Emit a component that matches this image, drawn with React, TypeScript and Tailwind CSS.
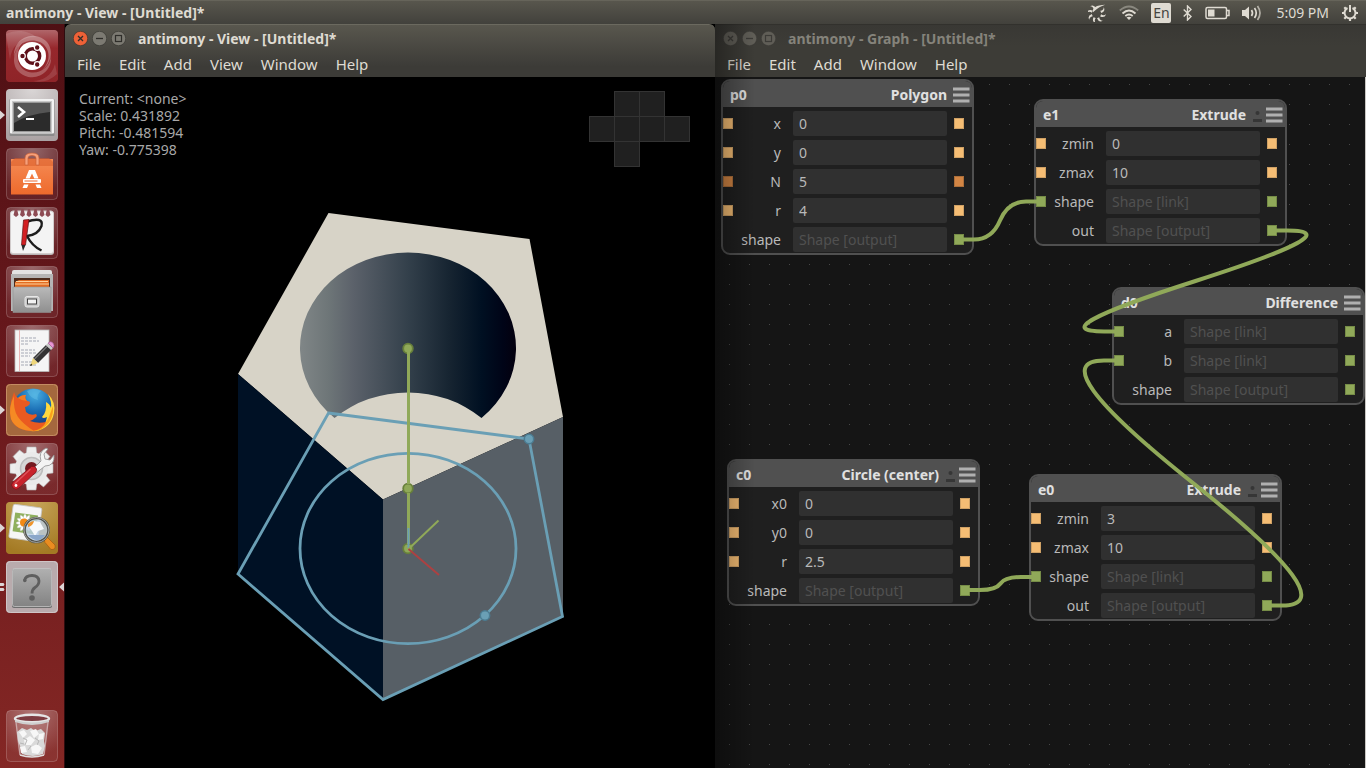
import type { ReactNode } from "react";

type PortColor = "float" | "int" | "shape" | "none";

const portClass: Record<PortColor, string> = {
  float: "border-[#cfa165] bg-[#f5bd74]",
  int: "border-[#ad6f3a] bg-[#d28544]",
  shape: "border-[#768c47] bg-[#90a959]",
  none: "border-transparent",
};

type Row = { name: string; value?: string; hint?: string; left: PortColor; right: PortColor };
type NodeInfo = { id: string; title: string; place: string; dot: boolean; rows: Row[] };

const nodes: NodeInfo[] = [
  {
    id: "p0",
    title: "Polygon",
    place: "left-[6px] top-[2px]",
    dot: false,
    rows: [
      { name: "x", value: "0", left: "float", right: "float" },
      { name: "y", value: "0", left: "float", right: "float" },
      { name: "N", value: "5", left: "int", right: "int" },
      { name: "r", value: "4", left: "float", right: "float" },
      { name: "shape", hint: "Shape [output]", left: "none", right: "shape" },
    ],
  },
  {
    id: "e1",
    title: "Extrude",
    place: "left-[319px] top-[22px]",
    dot: true,
    rows: [
      { name: "zmin", value: "0", left: "float", right: "float" },
      { name: "zmax", value: "10", left: "float", right: "float" },
      { name: "shape", hint: "Shape [link]", left: "shape", right: "shape" },
      { name: "out", hint: "Shape [output]", left: "none", right: "shape" },
    ],
  },
  {
    id: "d0",
    title: "Difference",
    place: "left-[397px] top-[210px]",
    dot: false,
    rows: [
      { name: "a", hint: "Shape [link]", left: "shape", right: "shape" },
      { name: "b", hint: "Shape [link]", left: "shape", right: "shape" },
      { name: "shape", hint: "Shape [output]", left: "none", right: "shape" },
    ],
  },
  {
    id: "c0",
    title: "Circle (center)",
    place: "left-[12px] top-[382px]",
    dot: true,
    rows: [
      { name: "x0", value: "0", left: "float", right: "float" },
      { name: "y0", value: "0", left: "float", right: "float" },
      { name: "r", value: "2.5", left: "float", right: "float" },
      { name: "shape", hint: "Shape [output]", left: "none", right: "shape" },
    ],
  },
  {
    id: "e0",
    title: "Extrude",
    place: "left-[314px] top-[397px]",
    dot: true,
    rows: [
      { name: "zmin", value: "3", left: "float", right: "float" },
      { name: "zmax", value: "10", left: "float", right: "float" },
      { name: "shape", hint: "Shape [link]", left: "shape", right: "shape" },
      { name: "out", hint: "Shape [output]", left: "none", right: "shape" },
    ],
  },
];

function Port({ color }: { color: PortColor }) {
  return <span className={`h-[11px] w-[10px] shrink-0 border ${portClass[color]}`} />;
}

function NodeCard({ node }: { node: NodeInfo }) {
  return (
    <section className={`absolute w-[253px] overflow-hidden rounded-[9px] border-2 border-[#505050] bg-[#1f1f1f] pb-px ${node.place}`}>
      <header className="flex h-[26px] items-center bg-[#505050] pt-[2px] pr-[2px] pl-[7px] text-sm font-bold text-[#e0e0e0]">
        <span className="flex-1">{node.id}</span>
        <span>{node.title}</span>
        {node.dot && (
          <svg className="ml-[6px]" width="11" height="18" viewBox="0 0 11 18" aria-hidden="true">
            <circle cx="5.5" cy="7" r="2" fill="#363636" />
            <rect x="1" y="13" width="9" height="3" rx="0.5" fill="#363636" />
          </svg>
        )}
        <button type="button" aria-label={`${node.id} menu`} className={node.dot ? "ml-[3px]" : "ml-[6px]"}>
          <svg width="17" height="16" viewBox="0 0 17 16" className="block">
            <path d="M0 2h16.5M0 8h16.5M0 14h16.5" stroke="#b0b0b0" strokeWidth="3" />
          </svg>
        </button>
      </header>
      <div className="flex flex-col gap-1 pt-1">
        {node.rows.map((row) => (
          <div key={row.name} className="flex h-[25px] items-center">
            <Port color={row.left} />
            <label htmlFor={`${node.id}-${row.name}`} className="w-12 text-right text-sm text-[#b9b9b9]">
              {row.name}
            </label>
            <input
              id={`${node.id}-${row.name}`}
              defaultValue={row.value}
              placeholder={row.hint}
              readOnly={row.hint !== undefined}
              className="mr-[7px] ml-3 h-[25px] w-[154px] rounded-xs bg-[#303030] px-[6px] text-sm text-[#b9b9b9] outline-none placeholder:text-[#505050]"
            />
            <Port color={row.right} />
          </div>
        ))}
      </div>
    </section>
  );
}

function WindowFrame({ title, menus, active, children }: { title: string; menus: string[]; active: boolean; children: ReactNode }) {
  const glyph = active ? "#2f2e2a" : "#3c3b37";
  const disc = active ? "#7c7a72" : "#605e57";
  const rim = active ? "#33322e" : "#3c3b37";
  return (
    <div className="flex h-full flex-col">
      <div
        className={
          active
            ? "rounded-t-md border-t border-[#6b695f] bg-linear-to-b from-[#59574e] to-[#3c3b37] to-80%"
            : "border-t border-[#32312d] bg-linear-to-b from-[#393834] to-[#3d3c37] to-40%"
        }
      >
        <div className="flex h-[27px] items-center gap-1 pl-2">
          <button type="button" aria-label="Close">
            <svg width="15" height="15" viewBox="0 0 15 15" className="block">
              <circle cx="7.5" cy="7.5" r="7.2" fill={active ? "#ee6137" : disc} stroke={rim} strokeWidth="0.6" />
              <path d="M5 5l5 5M10 5l-5 5" stroke={glyph} strokeWidth="1.3" />
            </svg>
          </button>
          <button type="button" aria-label="Minimize">
            <svg width="15" height="15" viewBox="0 0 15 15" className="block">
              <circle cx="7.5" cy="7.5" r="7.2" fill={disc} stroke={rim} strokeWidth="0.6" />
              <path d="M4 7.5h7" stroke={glyph} strokeWidth="1.3" />
            </svg>
          </button>
          <button type="button" aria-label="Maximize">
            <svg width="15" height="15" viewBox="0 0 15 15" className="block">
              <circle cx="7.5" cy="7.5" r="7.2" fill={disc} stroke={rim} strokeWidth="0.6" />
              <rect x="4.5" y="4.5" width="6" height="6" fill="none" stroke={glyph} strokeWidth="1.2" />
            </svg>
          </button>
          <h1 className={`ml-2 text-sm font-bold ${active ? "text-[#dfdbd2]" : "text-[#85837b]"}`}>{title}</h1>
        </div>
        <nav className="flex h-[25px] items-center gap-[18px] pl-3 text-[15px] text-[#dfdbd2]">
          {menus.map((m) => (
            <button key={m} type="button">
              {m}
            </button>
          ))}
        </nav>
      </div>
      <div className="relative min-h-0 flex-1 overflow-hidden">{children}</div>
    </div>
  );
}

function Scene() {
  return (
    <svg className="block h-full w-full" viewBox="65 77 650 691" aria-label="3D view">
      <defs>
        <linearGradient id="bore" gradientUnits="userSpaceOnUse" x1="300" y1="0" x2="516" y2="0">
          <stop offset="0" stopColor="#808687" />
          <stop offset="0.13" stopColor="#6e7678" />
          <stop offset="0.25" stopColor="#5b616a" />
          <stop offset="0.5" stopColor="#33404b" />
          <stop offset="0.7" stopColor="#152330" />
          <stop offset="0.84" stopColor="#001022" />
          <stop offset="0.94" stopColor="#000417" />
          <stop offset="1" stopColor="#04000e" />
        </linearGradient>
      </defs>
      <path d="M328.500 213L529.500 239L563 417L383 499.500L238 374Z" fill="#d7d3c7" />
      <path d="M238 374L383 499.500V699.500L238 574Z" fill="#001125" />
      <path d="M383 499.500L563 417V616.500L383 699.500Z" fill="#575f66" />
      <path d="M334.500 418A108 95.500 0 1 1 481.500 418A108 95.500 0 0 0 334.500 418Z" fill="url(#bore)" />
      <g fill="none" stroke="#6a9fb5" strokeWidth="2.800">
        <path d="M328.500 413L529 439L562.500 616.500L383 699.500L238 574Z" />
        <ellipse cx="408" cy="548.500" rx="108" ry="95.200" />
      </g>
      <g fill="#6a9fb5" stroke="#4b7c92" strokeWidth="1.500">
        <circle cx="529" cy="439" r="4.700" />
        <circle cx="485" cy="615.500" r="4.700" />
      </g>
      <path d="M408.500 348V548" stroke="#90a959" strokeWidth="3" />
      <g fill="#90a959" stroke="#68803b" strokeWidth="1.800">
        <circle cx="408" cy="348.500" r="4.800" />
        <circle cx="408" cy="488.500" r="4.800" />
        <circle cx="408" cy="548.500" r="4.800" />
      </g>
      <path d="M408.500 348V484M408.500 493V544" stroke="#90a959" strokeWidth="3" />
      <path d="M408.500 528V548" stroke="#6a9fb5" strokeWidth="2" />
      <path d="M408.500 549L438.500 520.500" stroke="#90a959" strokeWidth="2" />
      <path d="M408.500 549L439 575" stroke="#ac4142" strokeWidth="2" />
    </svg>
  );
}

function ViewCube() {
  const cells = [
    [25, 0],
    [50, 0],
    [0, 25],
    [25, 25],
    [50, 25],
    [75, 25],
    [25, 50],
  ];
  return (
    <svg className="absolute top-[14px] right-6 block" width="102" height="77" viewBox="0 0 102 77" aria-hidden="true">
      {cells.map(([x, y]) => (
        <rect key={`${x}-${y}`} x={x + 0.5} y={y + 0.5} width="25" height="25" fill="#202020" stroke="#333333" />
      ))}
    </svg>
  );
}

function Wires() {
  return (
    <svg className="pointer-events-none absolute inset-0 block" width="650" height="691" viewBox="715 77 650 691" fill="none" stroke="#90a959" strokeWidth="4" aria-hidden="true">
      <path d="M959 239.500H974Q992 239.500 1000 220.500Q1008 201.500 1026 201.500H1041" />
      <path d="M965 590H980Q996 590 1000.500 583.500Q1005 577 1021 577H1036" />
      <path d="M1272 230.500H1287Q1353 230.500 1195.500 281Q1038 331.500 1104 331.500H1119" />
      <path d="M1267 605.500H1282Q1347 605.500 1193 483Q1039 360.500 1104 360.500H1119" />
    </svg>
  );
}

function UbuntuIcon() {
  return (
    <>
      <rect width="52" height="52" rx="4" fill="url(#tileUbuntu)" />
      <path d="M8 27a19 19 0 0 1 32-16c8 8 6 22-4 29C46 31 44 17 34 12 23 7 9 14 8 27Z" fill="#fff" opacity="0.3" />
      <path d="M45 26a19 19 0 0 1-33 15C5 33 8 19 16 13c-7 9-6 23 4 28 12 5 24-3 25-15Z" fill="#fff" opacity="0.25" />
      <path d="M0 4a28 28 0 0 1 30 3A24 24 0 0 0 4 30M51 44a26 26 0 0 1-24 7c9 0 19-5 22-17" fill="#fff" opacity="0.12" />
      <circle cx="26" cy="26" r="14" fill="#fff" />
      <circle cx="26.500" cy="26" r="7.200" fill="none" stroke="#5e1019" strokeWidth="3.400" />
      <g stroke="#fff" strokeWidth="1.200" fill="#5e1019">
        <circle cx="16.500" cy="26" r="2.800" />
        <circle cx="31.200" cy="17.500" r="2.800" />
        <circle cx="31.200" cy="34.500" r="2.800" />
      </g>
    </>
  );
}

function TerminalIcon() {
  return (
    <>
      <rect width="52" height="52" rx="4" fill="url(#tileSilver)" />
      <rect x="3.500" y="10" width="45" height="37" rx="1" fill="#8b8b8b" />
      <rect x="4" y="10" width="44" height="34.500" rx="1" fill="#f3f3f3" />
      <rect x="6" y="12" width="40" height="32" fill="#c9c9c9" />
      <rect x="7.500" y="13.500" width="37" height="29" fill="#2b2b2b" stroke="#999" />
      <path d="M8 14h36v9Q22 25 8 34Z" fill="#fff" opacity="0.2" />
      <path d="M12 18l6 5-6 5" fill="none" stroke="#fff" strokeWidth="2.600" />
      <path d="M20 30h8" stroke="#fff" strokeWidth="2" />
    </>
  );
}

function SoftwareIcon() {
  return (
    <>
      <path d="M5 11h42v35.500H5Z" fill="url(#bag)" />
      <path d="M5 14l4-4h34l4 4v4H5Z" fill="#d95c29" opacity="0.55" />
      <path d="M19 17V10q0-5 7-5t7 5v7h-3v-7q0-2.500-4-2.500t-4 2.500v7Z" fill="#f7a07a" stroke="#ca623a" strokeWidth="0.700" />
      <path d="M23 22h6l3.500 8.500h-4.200L26 25.500 23.700 30.500h-4.200Z" fill="#fff" />
      <rect x="17" y="31" width="18" height="4" rx="1" fill="#fff" />
      <path d="M18 36.500h4.500l-1.500 3.500h-4.500ZM29.500 36.500h4.500l1.500 3.500h-4.500Z" fill="#fff" />
      <path d="M18.500 33h13" stroke="#ec6a35" strokeWidth="1" />
    </>
  );
}

function NotesIcon() {
  return (
    <>
      <rect x="4" y="5" width="44" height="43" rx="3" fill="#b9b5b5" />
      <rect x="4.500" y="4" width="43" height="42.500" rx="2.500" fill="#f4f4f4" stroke="#d2cccc" />
      <g fill="#8e4c54">
        {[10, 16.500, 23, 29.500, 36, 42].map((x) => (
          <path key={x} d={`M${x - 1} 2h2l1.500 6-2.500 2-2.500-2Z`} />
        ))}
      </g>
      <path d="M20 15Q38 9 35.500 19Q32 28 21 29Q26 39 35.500 43.500" fill="none" stroke="#1d1d1d" strokeWidth="2.400" />
      <path d="M17.500 13l5.500-.5L19.500 38H15.500Z" fill="#d31f22" stroke="#5e1214" strokeWidth="0.700" />
      <path d="M15.500 38h4L17 44Z" fill="#292929" />
    </>
  );
}

function FilesIcon() {
  return (
    <>
      <path d="M6 6q0-2 2-2h36q2 0 2 2v38H6Z" fill="#e3e3e3" />
      <path d="M5 8h42v37H5Z" fill="#b5b5b5" />
      <rect x="8" y="12" width="36" height="11" fill="#4c2b1d" />
      <path d="M9 16l4-2h30v8H9Z" fill="#e36c22" />
      <path d="M9 18h34M10 15.500h32" stroke="#ffd29b" strokeWidth="1.200" />
      <path d="M7 21h38v25.500H7Z" fill="url(#cabinet)" stroke="#909090" strokeWidth="0.600" />
      <rect x="19" y="30.500" width="14" height="10.500" rx="2" fill="#c9c9c9" stroke="#e7e7e7" />
      <rect x="21.500" y="33" width="9" height="5" fill="#f2f2f2" stroke="#444" />
    </>
  );
}

function EditorIcon() {
  return (
    <>
      <rect x="9" y="5" width="34" height="41.500" fill="#f5f5f5" stroke="#b8b8b8" strokeWidth="0.800" />
      <path d="M13.500 5v41" stroke="#e9b6b6" />
      <path d="M15 13h16M15 16h18M15 19h8M15 25h14M15 28h16M15 31h9M15 37h14M15 40h16" stroke="#a5a9b5" strokeWidth="1" strokeDasharray="3 1" />
      <path d="M27 33L40 20l5 5-13 13Z" fill="#333" />
      <path d="M28.500 34L41 21.500" stroke="#777" strokeWidth="1.200" />
      <path d="M40 20l2-2 5 5-2 2Z" fill="#c9c9c9" />
      <path d="M42 18q3-2.500 5 0t0 5Z" fill="#e896d3" stroke="#a05d93" strokeWidth="0.600" />
      <path d="M27 33l5 5-8 3Z" fill="#efd77a" />
      <path d="M25 38.500l1.500 1.700-2.500.8Z" fill="#222" />
    </>
  );
}

function FirefoxIcon() {
  return (
    <>
      <rect width="52" height="52" rx="4" fill="#a4683e" />
      <rect x="0.500" y="0.500" width="51" height="51" rx="4" fill="none" stroke="#c48b62" />
      <circle cx="27" cy="25" r="20.500" fill="url(#globe)" />
      <path d="M21 7q7-4 14 0-5 4-3 9-7-1-11-9Z" fill="#5db9e4" opacity="0.6" />
      <path d="M42 10q8 8 6 19-3 15-18 18 10-5 11-14-4 2-5 0 5-5 4-15 4 2 5 6 1-6-3-14Z" fill="#ffd83e" />
      <path d="M47 22q1 15-10 22-5 4-12 3 16-5 19-17Z" fill="#f9a11c" />
      <path d="M8 8q1 4 4 6 3-3 8-3-2 3 1 6 3 0 3 2-1 3-5 4l1 5q4 4 10 2 2 2-1 4-2 2-5 3 8 3 16 1-3 7-13 9Q10 47 5 35 2 24 8 8Z" fill="#ea5a20" />
      <path d="M5 35Q2 24 8 12q-1 14 4 21t16 14Q10 47 5 35Z" fill="#f58a24" />
      <path d="M12 14q3-3 8-3-2 3 1 6-5 0-9-3Z" fill="#f47c22" />
    </>
  );
}

function SettingsIcon() {
  return (
    <>
      <g fill="#eeeeee" stroke="#b6b6b6" strokeWidth="0.600">
        {[0, 45, 90, 135].map((a) => (
          <path key={a} d="M21 4h9l1 8v28l-1 7h-9l-1-7V12Z" transform={`rotate(${a} 25.500 25.500)`} />
        ))}
      </g>
      <circle cx="25.500" cy="25.500" r="16.500" fill="#eaeaea" />
      <circle cx="25.500" cy="25.500" r="11" fill="#d7d7d7" stroke="#bdbdbd" strokeWidth="1.500" />
      <circle cx="25.500" cy="25.500" r="6.500" fill="#741a20" />
      <path d="M25 28L35 18q-3-9 5-13l2 1-4 5 1 5 5 1 4-5q1 11-9 11L29 31Z" fill="#f4f4f4" stroke="#8e8e8e" strokeWidth="0.800" />
      <path d="M25.500 23.500q3-1 4.500 1.500t0 4L13 45q-3 3-6 0t0-6Z" fill="#c8232c" stroke="#7b1219" strokeWidth="0.800" />
      <path d="M24 26.500L9 40.500" stroke="#dd555c" strokeWidth="1.400" strokeLinecap="round" />
      <circle cx="10" cy="42.500" r="1.400" fill="#fff" />
    </>
  );
}

function ViewerIcon() {
  return (
    <>
      <rect width="52" height="52" rx="4" fill="url(#tileGold)" />
      <g transform="rotate(8 20 20)">
        <rect x="5" y="4" width="29" height="34" rx="2" fill="#f6f6f6" stroke="#c5c5c5" strokeWidth="0.800" />
        <rect x="8" y="12" width="23" height="19" fill="#8fb05d" />
      </g>
      <g fill="#fff" stroke="#c7c9c0" strokeWidth="0.400">
        {[0, 30, 60, 90, 120, 150].map((a) => (
          <ellipse key={a} cx="19" cy="21" rx="2" ry="9" transform={`rotate(${a} 19 21)`} />
        ))}
      </g>
      <circle cx="18" cy="20.500" r="4" fill="#f28a16" />
      <path d="M38 37l3-2 8 8q1 5-4 4.500l-6-7Z" fill="#ea8d20" stroke="#a65a10" strokeWidth="0.700" />
      <circle cx="30.500" cy="28" r="12" fill="#bcd0e6" fillOpacity="0.8" stroke="#4f514d" strokeWidth="2.600" />
      <path d="M23 25l5-6 6 1 4 7-6 2-3 5-3-5Z" fill="#f6f9fc" />
      <path d="M22 33h17q-4 6-9 5t-8-5Z" fill="#8ba7ca" />
      <path d="M22 22q3-3 6-3-1 5-6 6Z" fill="#ee942c" />
      <circle cx="30.500" cy="28" r="12.500" fill="none" stroke="#b8b8b0" strokeWidth="0.800" />
    </>
  );
}

function UnknownIcon() {
  return (
    <>
      <rect width="52" height="52" rx="4" fill="#b9abad" />
      <rect x="0.500" y="0.500" width="51" height="51" rx="4" fill="none" stroke="#cfc5c6" />
      <rect x="6" y="8" width="40" height="39" rx="2" fill="#6d6d6d" />
      <rect x="6.500" y="7.500" width="39" height="38" rx="2" fill="url(#plate)" stroke="#c4c4c4" strokeWidth="0.800" />
      <path d="M18.500 19.500q1-5 7.500-5t7 5.500q0 4-4 6.500-3 2-3 6" fill="none" stroke="#5f5f5f" strokeWidth="2.800" />
      <circle cx="18.800" cy="19.500" r="1.800" fill="#5f5f5f" />
      <circle cx="26" cy="37" r="2.800" fill="#5f5f5f" />
    </>
  );
}

function TrashIcon() {
  return (
    <>
      <path d="M9 9h34l-4 36q-13 4-26 0Z" fill="#fff" opacity="0.14" />
      <path d="M10 12l4 33M42 12l-4 33" stroke="#d9c4c6" strokeWidth="1.300" opacity="0.7" />
      <path d="M11 22l5-4 5 2 4-2 4 3 6-2 4 4-1 8 1 5-2 8q-10 4-21 0l-2-8-2-5Z" fill="#d9d9d9" />
      <path d="M13 22l5-2 3 4-4 4ZM24 21l6-2 3 5-5 4ZM33 24l5-1-1 6-5 1ZM18 30l6-4 5 4-4 5-6 0ZM14 37l5-1 2 6-6 1ZM25 37l6-3 5 4-4 6-6-1Z" fill="#f7f7f7" />
      <path d="M17 28l4 2-2 5M29 28l4 3-2 4M22 40l3-4M14 33l4 1" stroke="#b6b6b6" fill="none" />
      <ellipse cx="26" cy="8.500" rx="17" ry="3.800" fill="#7d3c41" stroke="#e5e5e5" strokeWidth="2.400" />
      <path d="M9 10v2q17 6 34 0v-2q-17 5-34 0Z" fill="#cfcfcf" />
      <path d="M14 45q12 4 24 0" stroke="#e0e0e0" strokeWidth="1.400" fill="none" />
    </>
  );
}

const launchers: { name: string; art: ReactNode; mark?: "one" | "two" }[] = [
  { name: "Dash", art: <UbuntuIcon /> },
  { name: "Terminal", art: <TerminalIcon />, mark: "one" },
  { name: "Software Center", art: <SoftwareIcon /> },
  { name: "Notes", art: <NotesIcon /> },
  { name: "Files", art: <FilesIcon /> },
  { name: "Text Editor", art: <EditorIcon /> },
  { name: "Firefox", art: <FirefoxIcon />, mark: "one" },
  { name: "System Settings", art: <SettingsIcon /> },
  { name: "Image Viewer", art: <ViewerIcon />, mark: "one" },
  { name: "antimony", art: <UnknownIcon />, mark: "two" },
];

function Launcher({ name, art, mark }: { name: string; art: ReactNode; mark?: "one" | "two" }) {
  return (
    <button type="button" aria-label={name} className="block h-[52px] w-full">
      <svg width="64" height="52" viewBox="-6 0 64 52" className="block">
        <rect x="0.500" y="0.500" width="51" height="51" rx="4" fill="url(#tileGlass)" stroke="#fff" strokeOpacity="0.2" />
        {art}
        {mark === "one" && <path d="M-6 21.500l5 4.500-5 4.500Z" fill="#dcd5d5" />}
        {mark === "two" && <path d="M-6 22h3.500l1 1.500-1 1.500H-6ZM-6 27h3.500l1 1.500-1 1.500H-6ZM58 21.500l-5 4.500 5 4.500Z" fill="#dcd5d5" />}
      </svg>
    </button>
  );
}

function LauncherDefs() {
  return (
    <svg width="0" height="0" className="absolute" aria-hidden="true">
      <defs>
        <radialGradient id="tileGlass" cx="0.5" cy="0" r="0.9">
          <stop offset="0" stopColor="#fff" stopOpacity="0.36" />
          <stop offset="1" stopColor="#fff" stopOpacity="0.06" />
        </radialGradient>
        <linearGradient id="tileUbuntu" x1="0" y1="0" x2="0" y2="1">
          <stop offset="0" stopColor="#b0666a" />
          <stop offset="0.35" stopColor="#96272c" />
          <stop offset="1" stopColor="#8f2428" />
        </linearGradient>
        <radialGradient id="tileSilver" cx="0.5" cy="0" r="1">
          <stop offset="0" stopColor="#dad6d6" />
          <stop offset="1" stopColor="#aaa2a3" />
        </radialGradient>
        <radialGradient id="tileGold" cx="0.5" cy="0" r="1">
          <stop offset="0" stopColor="#c9a75c" />
          <stop offset="1" stopColor="#a47a24" />
        </radialGradient>
        <linearGradient id="bag" x1="0" y1="0" x2="0" y2="1">
          <stop offset="0" stopColor="#f58b55" />
          <stop offset="1" stopColor="#ee6a2c" />
        </linearGradient>
        <linearGradient id="cabinet" x1="0" y1="0" x2="0" y2="1">
          <stop offset="0" stopColor="#b9b9b9" />
          <stop offset="1" stopColor="#8f8f8f" />
        </linearGradient>
        <linearGradient id="plate" x1="0" y1="0" x2="0" y2="1">
          <stop offset="0" stopColor="#b0b0b0" />
          <stop offset="1" stopColor="#838383" />
        </linearGradient>
        <radialGradient id="globe" cx="0.55" cy="0.15" r="0.8">
          <stop offset="0" stopColor="#49b0e2" />
          <stop offset="0.5" stopColor="#1a6db4" />
          <stop offset="1" stopColor="#14357c" />
        </radialGradient>
      </defs>
    </svg>
  );
}

function Indicators() {
  return (
    <div className="flex items-center text-sm text-[#dfdbd2]">
      <svg width="18" height="18" viewBox="0 0 18 18" className="mr-[13px]" fill="currentColor" aria-hidden="true">
        {[0, 45, 90, 135, 180, 225, 270].map((a) => (
          <path key={a} d="M12.300 6.800Q15.500 6.300 15.800 3.200Q17.800 7.200 13.200 9Z" transform={`rotate(${a} 8.500 9.500)`} />
        ))}
        <path d="M5 8.200Q3.500 1.500 17.200 0.800Q10.500 3.400 7.600 6Z" />
      </svg>
      <svg width="20" height="16" viewBox="0 0 20 16" className="mr-[12px]" fill="none" stroke="currentColor" strokeWidth="1.800" aria-hidden="true">
        <path d="M.8 5.500Q10-2.500 19.200 5.500" opacity="0.4" />
        <path d="M3.500 8.500Q10 2.500 16.500 8.500M6.300 11Q10 8 13.700 11" />
        <path d="M10 15l-2.500-2.500Q10 10.800 12.500 12.500Z" fill="currentColor" stroke="none" />
      </svg>
      <span className="mr-3 flex h-5 w-5 items-center justify-center rounded-xs bg-[#dfdbd2] text-sm text-[#45443f]">En</span>
      <svg width="9" height="16" viewBox="0 0 9 16" className="mr-[13px]" fill="none" stroke="currentColor" strokeWidth="1.400" aria-hidden="true">
        <path d="M.7 4.500l7.300 7L4.500 15V1L8 4.500l-7.300 7" />
      </svg>
      <svg width="25" height="14" viewBox="0 0 25 14" className="mr-[11px]" fill="none" stroke="currentColor" strokeWidth="1.500" aria-hidden="true">
        <rect x="1" y="1.500" width="20.500" height="11" rx="1.500" />
        <path d="M22 4.500h2v5h-2" />
        <rect x="3" y="3.500" width="6.500" height="7" fill="currentColor" stroke="none" />
      </svg>
      <svg width="22" height="18" viewBox="0 0 22 18" className="mr-[13px]" fill="none" stroke="currentColor" strokeWidth="1.700" aria-hidden="true">
        <path d="M1 6h3l4-3.500v13L4 12H1Z" fill="currentColor" stroke="none" />
        <path d="M10.500 6q2 3 0 6M13.500 4q3.500 5 0 10" />
        <path d="M16.500 2q5 7 0 14" opacity="0.7" />
      </svg>
      <time className="mr-3">5:09 PM</time>
      <svg width="18" height="18" viewBox="0 0 18 18" fill="none" stroke="currentColor" aria-hidden="true">
        <path d="M6.500 4A5.500 5.500 0 1 0 11.500 4" strokeWidth="2" />
        <path d="M9 1v7" strokeWidth="2" />
        <path d="M1 9h2.500M14.500 9H17M9 14.500V17M3.300 3.300l2 2M14.700 3.300l-2 2M3.300 14.700l2-2M14.700 14.700l-2-2" strokeWidth="2.200" />
      </svg>
    </div>
  );
}

export default function App() {
  return (
    <div className="flex h-screen flex-col overflow-hidden bg-black font-['Noto_Sans',sans-serif]">
      <header className="flex h-6 shrink-0 items-center justify-between border-t border-[#66645a] bg-linear-to-b from-[#58564d] to-[#42413c] pr-[7px] pl-[6px]">
        <span className="text-sm font-bold text-[#dfdbd2]">antimony - View - [Untitled]*</span>
        <Indicators />
      </header>
      <div className="flex min-h-0 flex-1">
        <aside className="flex w-[65px] shrink-0 flex-col justify-between border-r border-[#2e0c0f] bg-linear-to-b from-[#4f1014] via-[#6b191d] to-[#842724] pt-[6px] pb-[6px]">
          <LauncherDefs />
          <div className="flex flex-col gap-[7px]">
            {launchers.map((l) => (
              <Launcher key={l.name} {...l} />
            ))}
          </div>
          <Launcher name="Trash" art={<TrashIcon />} />
        </aside>
        <main className="min-w-0 flex-[650]">
          <WindowFrame title="antimony - View - [Untitled]*" menus={["File", "Edit", "Add", "View", "Window", "Help"]} active>
            <Scene />
            <div className="absolute top-[13px] left-[14px] text-sm leading-[17px] text-[#a8a8a8]">
              <p>Current: &lt;none&gt;</p>
              <p>Scale: 0.431892</p>
              <p>Pitch: -0.481594</p>
              <p>Yaw: -0.775398</p>
            </div>
            <ViewCube />
          </WindowFrame>
        </main>
        <section className="relative min-w-0 flex-[651]">
          <WindowFrame title="antimony - Graph - [Untitled]*" menus={["File", "Edit", "Add", "Window", "Help"]} active={false}>
            <div className="relative h-full overflow-hidden border-r border-[#c9c7c3] bg-[#151515] bg-[linear-gradient(to_right,#151515_19px,transparent_19px),linear-gradient(to_bottom,#151515_19px,#484848_19px)] bg-size-[20px_20px] bg-position-[-5px_-12px]">
              {nodes.map((n) => (
                <NodeCard key={n.id} node={n} />
              ))}
              <Wires />
            </div>
          </WindowFrame>
          <div className="pointer-events-none absolute inset-y-0 left-0 w-10 bg-linear-to-r from-black/35 to-transparent" />
        </section>
      </div>
    </div>
  );
}
